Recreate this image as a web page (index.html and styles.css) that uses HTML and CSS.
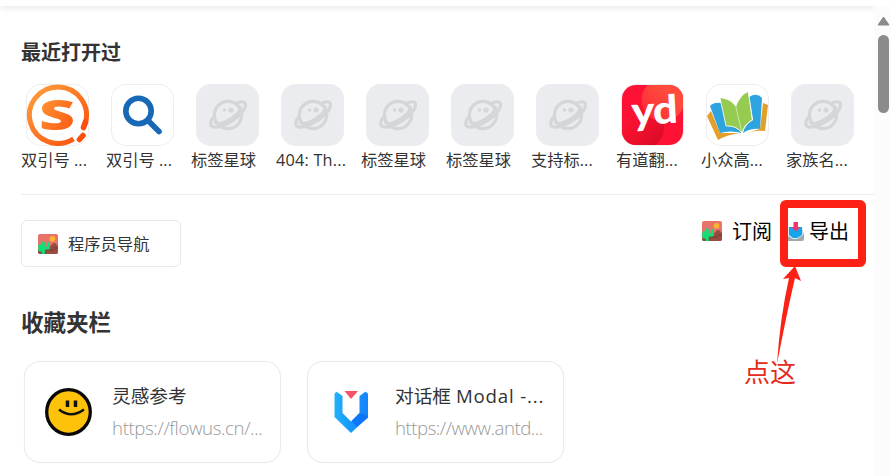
FILE: index.html
```html
<!DOCTYPE html>
<html lang="zh-CN">
<head>
<meta charset="utf-8">
<title>标签星球</title>
<link rel="stylesheet" href="styles.css">
</head>
<body>
<svg class="defs" width="0" height="0" aria-hidden="true">
  <defs>
    <linearGradient id="orange" x1="0" y1="0" x2="1" y2="1"><stop offset="0" stop-color="#ffa03c"/><stop offset="1" stop-color="#fb4e0c"/></linearGradient>
    <linearGradient id="blue" x1="0" y1="0" x2="1" y2="0"><stop offset="0" stop-color="#22b2fa"/><stop offset=".5" stop-color="#1797fb"/><stop offset="1" stop-color="#1683fc"/></linearGradient>
    <linearGradient id="glow" x1="0" y1="1" x2="1" y2="0"><stop offset="0" stop-color="#fd2434"/><stop offset=".6" stop-color="#ff4a3c"/><stop offset="1" stop-color="#ff4a3c"/></linearGradient>
    <linearGradient id="crimson" x1="0" y1="0" x2="1" y2="1"><stop offset=".3" stop-color="#fc1232"/><stop offset="1" stop-color="#d40a22"/></linearGradient>
    <clipPath id="yd-tile"><rect x="1" y="1" width="61" height="60" rx="14"/></clipPath>
  </defs>
  <symbol id="planet" viewBox="0 0 38 32">
    <g fill="none" stroke="#d5d6d7" stroke-width="3.200" stroke-linecap="round">
      <circle cx="19" cy="16" r="13.600"/>
      <path d="M27 4.500C33 1.500 37.500 2.500 36.300 7C35.500 13 26 21 17.500 25C9 29 1.700 29.500 1.700 24.500C1.700 22.500 2.800 20 5.300 17.500"/>
      <path d="M31.300 8C32 12 25 19 17 22.500C12.500 24.600 8.500 25 6.500 23.500"/>
    </g>
    <circle cx="15.500" cy="11" r="1.700" fill="#d5d6d7"/><circle cx="22" cy="11" r="2.600" fill="#d5d6d7"/>
  </symbol>
  <symbol id="desert" viewBox="0 0 20 20">
    <rect width="20" height="20" rx="2" fill="#e8736a"/>
    <circle cx="14.500" cy="4.800" r="2.800" fill="#fdb52e"/>
    <path d="M8 14.500L13.500 11L15 9H17L20 12V18Q20 20 18 20H8Z" fill="#9b4c40"/>
    <path d="M0 16L4 14H9V20H2Q0 20 0 18Z" fill="#854d42"/>
    <path d="M9 16H16M15 14H20" stroke="#753b35"/>
    <path d="M5.300 19.500V8.500M5.300 16H1.800V11.500M5.300 14H10.400V9.500" fill="none" stroke="#10df78" stroke-width="3" stroke-linecap="round" stroke-linejoin="round"/>
  </symbol>
</svg>
<div class="window">
  <main class="page">
    <div class="topbar"></div>
    <h2 class="recent-title">最近打开过</h2>
    <div class="recent">
      <div class="item"><div class="tile"><svg viewBox="0 0 63 62"><path d="M59 40A28.500 28.200 0 1 0 47.500 54.800" fill="none" stroke="url(#orange)" stroke-width="5"/><text class="logo-s" transform="translate(13 46) scale(1.450 1)" fill="url(#orange)">S</text><path d="M59.500 38L57.500 43.500M57 51.500L53.500 55.500" stroke="#fb500e" stroke-width="5.600" stroke-linecap="round"/></svg></div><span>双引号 ...</span></div>
      <div class="item"><div class="tile"><svg viewBox="0 0 63 62"><g fill="none" stroke="#1769b5" stroke-width="5.600"><circle cx="27.500" cy="27" r="12.700"/><path d="M37 36.500L48 47.500" stroke-linecap="round"/></g></svg></div><span>双引号 ...</span></div>
      <div class="item"><div class="tile empty"><svg class="planet"><use href="#planet"/></svg></div><span>标签星球</span></div>
      <div class="item"><div class="tile empty"><svg class="planet"><use href="#planet"/></svg></div><span class="wide">404: Th...</span></div>
      <div class="item"><div class="tile empty"><svg class="planet"><use href="#planet"/></svg></div><span>标签星球</span></div>
      <div class="item"><div class="tile empty"><svg class="planet"><use href="#planet"/></svg></div><span>标签星球</span></div>
      <div class="item"><div class="tile empty"><svg class="planet"><use href="#planet"/></svg></div><span>支持标...</span></div>
      <div class="item"><div class="tile"><svg viewBox="0 0 63 62"><g clip-path="url(#yd-tile)"><rect width="63" height="62" fill="#fd1236"/><circle cx="19" cy="43" r="24" fill="url(#crimson)"/><circle cx="42" cy="16" r="21.500" fill="url(#glow)"/></g><text class="logo-yd" transform="translate(11 41) rotate(-3) scale(1.120 1)">yd</text></svg></div><span>有道翻...</span></div>
      <div class="item"><div class="tile"><svg viewBox="0 0 63 62"><path d="M1 32L5 27L14 49L34 49Q20 51 12 56Z" fill="#e2a02a"/><path d="M57 19L62 21L59 47Q50 46 40 49L54 45Z" fill="#e2a02a"/><path d="M4 22Q8 18 15 19L21 42Q31 42 36 49Q24 46 14 49Z" fill="#2da3df"/><path d="M43 13Q51 8 56 14L54 45Q45 44 37 49Q39 40 47 36Z" fill="#2da3df"/><path d="M14 14Q25 15 30 23Q34 11 42 8L46 36Q39 39 36 49Q29 41 20 42Z" fill="#95cb50"/><path d="M30 23L36 49" stroke="#d8edbd" stroke-width=".8"/><path d="M14 14L20 42Q30 41 36 49Q39 39 46.500 36L42.500 8" fill="none" stroke="#fff" stroke-width=".8"/></svg></div><span>小众高...</span></div>
      <div class="item"><div class="tile empty"><svg class="planet"><use href="#planet"/></svg></div><span>家族名...</span></div>
    </div>
    <div class="toolbar">
      <div class="nav-card"><svg class="scene"><use href="#desert"/></svg><span>程序员导航</span></div>
      <div class="actions">
        <div class="subscribe"><svg class="scene"><use href="#desert"/></svg><span>订阅</span></div>
        <div class="export"><svg class="inbox" viewBox="0 0 16 20"><path d="M0 10L2 6H14L16 13V17Q16 19 14 19H0Z" fill="#a2a9ae"/><path d="M0 5H14L15 13L9 17H5L0 14Z" fill="#dceef5"/><path d="M1 5H14V13L9 16H5L1 13Z" fill="#16a5eb"/><path d="M5.500 0H10V5H12L8 9.500L3.500 5H5.500Z" fill="#f13469"/></svg><span>导出</span></div>
      </div>
    </div>
    <h2 class="bookmark-title">收藏夹栏</h2>
    <div class="cards">
      <div class="card">
        <svg class="card-icon" viewBox="0 0 48 48"><ellipse cx="24.500" cy="24" rx="21.800" ry="22.300" fill="#ffc20a" stroke="#080808" stroke-width="3.300"/><path d="M23.500 12.500V19M31.500 12.500V19" stroke="#111" stroke-width="3.500"/><path d="M15 21.500Q27 31 40 21.500" fill="none" stroke="#111" stroke-width="2.400"/></svg>
        <div class="card-text"><span class="name">灵感参考</span><span class="url flow">https://flowus.cn/...</span></div>
      </div>
      <div class="card">
        <svg class="card-icon" viewBox="0 0 48 48"><path d="M7.500 6Q8 4 10 4L15.500 8V25L24 33.500L32.500 25V8L38 4Q41 4 41 7V29L24 45L7.500 29Z" fill="url(#blue)"/><path d="M32.500 25L41 28V30L30 39L24.500 33Z" fill="#096cf8" opacity=".7"/><path d="M17.500 3H31L24 11Z" fill="#f65368"/></svg>
        <div class="card-text"><span class="name">对话框 <span class="latin">Modal -...</span></span><span class="url">https://www.antd...</span></div>
      </div>
    </div>
    <div class="callout-box"></div>
    <svg class="arrow" viewBox="0 0 40 104"><path d="M27 0L33 15L27 12Q19 46 9 98Q12 52 21 12L15 13Z" fill="#fb2114"/></svg>
    <div class="callout-text">点这</div>
  </main>
  <aside class="scrollbar"><svg class="up" viewBox="0 0 13 10"><path d="M6.500 1L12 9H1Z" fill="#8b8b8b" stroke="#8b8b8b" stroke-linejoin="round"/></svg><div class="thumb"></div></aside>
</div>
</body>
</html>
```
FILE: styles.css
```css
* { box-sizing: border-box; }
body {
  margin: 0;
  background: #fff;
  color: #333;
  font-family: "Open Sans", "Noto Sans CJK SC", sans-serif;
}
svg { display: block; flex: none; }
.defs { position: absolute; }
.window { display: flex; width: 891px; height: 476px; overflow: hidden; }
.page { position: relative; width: 874px; height: 476px; overflow: hidden; }
.topbar { height: 6px; box-shadow: 0 1px 7px rgba(0, 0, 0, .13); clip-path: inset(6px 0 -12px 0); }
h2 { margin: 0; font-weight: 700; color: #333; white-space: nowrap; }
.recent-title { margin: 32px 0 0 21px; font-size: 20px; line-height: 30px; }
.recent {
  display: grid;
  grid-template-columns: repeat(10, 85px);
  height: 127px;
  margin-left: 21px;
  padding-top: 16px;
  border-bottom: 1px solid #ececec;
}
.item { font-size: 16.3px; white-space: nowrap; }
.item span { display: block; line-height: 29px; }
.item .wide { letter-spacing: .2px; }
.tile {
  display: flex;
  align-items: center;
  justify-content: center;
  width: 63px;
  height: 62px;
  margin-left: 5px;
  border-radius: 15px;
  box-shadow: inset 0 0 0 1px #eee;
}
.tile > svg { width: 63px; height: 62px; }
.tile.empty { background: #ebecf0; }
.tile > .planet { width: 38px; height: 32px; }
.logo-s { font: 800 43px "Open Sans", sans-serif; }
.logo-yd { font: 900 39px Lato, sans-serif; fill: #fff; letter-spacing: -1px; }
.toolbar { display: flex; justify-content: space-between; height: 72px; padding-left: 21px; }
.nav-card {
  display: flex;
  align-items: center;
  gap: 10px;
  width: 160px;
  height: 47px;
  margin-top: 25px;
  padding-left: 16px;
  border: 1px solid #e9e9e9;
  border-radius: 6px;
  font-size: 16.3px;
}
.nav-card span { padding-bottom: 2px; }
.scene { width: 20px; height: 20px; }
.actions { display: flex; gap: 16px; width: 172px; height: 72px; padding-top: 21px; color: #000; font-size: 20px; line-height: 31px; }
.subscribe { display: flex; gap: 10px; height: 30px; }
.subscribe svg { margin-top: 5px; }
.export { display: flex; gap: 5px; height: 30px; }
.inbox { width: 16px; height: 20px; margin-top: 6px; }
.bookmark-title { margin: 39px 0 0 21px; font-size: 22.5px; line-height: 34px; }
.cards { display: flex; gap: 26px; margin: 21px 0 0 24px; }
.card {
  display: flex;
  align-items: center;
  gap: 20px;
  width: 257px;
  height: 102px;
  padding-left: 20px;
  border-radius: 16px;
  box-shadow: inset 0 0 0 1px #ebebeb, 0 0 2px rgba(0, 0, 0, .04);
}
.card-icon { width: 48px; height: 48px; }
.card-text { display: flex; flex-direction: column; white-space: nowrap; }
.name { font-size: 18.7px; line-height: 32px; }
.latin { letter-spacing: .8px; }
.url { color: #999; font-size: 18.7px; font-weight: 300; line-height: 32px; letter-spacing: -.5px; }
.flow { letter-spacing: -.4px; }
.callout-box { position: absolute; left: 780px; top: 200px; width: 86px; height: 67px; border: 8px solid #fc2114; border-radius: 6px; }
.arrow { position: absolute; left: 768px; top: 266px; width: 40px; height: 104px; }
.callout-text { position: absolute; left: 744px; top: 354px; color: #e52b20; font-size: 26px; line-height: 36px; }
.scrollbar { width: 17px; height: 470px; margin-top: 6px; background: #fcfcfc; }
.up { width: 13px; height: 10px; margin: 10px 0 0 3px; }
.thumb { width: 11px; height: 78px; margin: 9px 0 0 4px; border-radius: 6px; background: #8b8b8b; }
```
